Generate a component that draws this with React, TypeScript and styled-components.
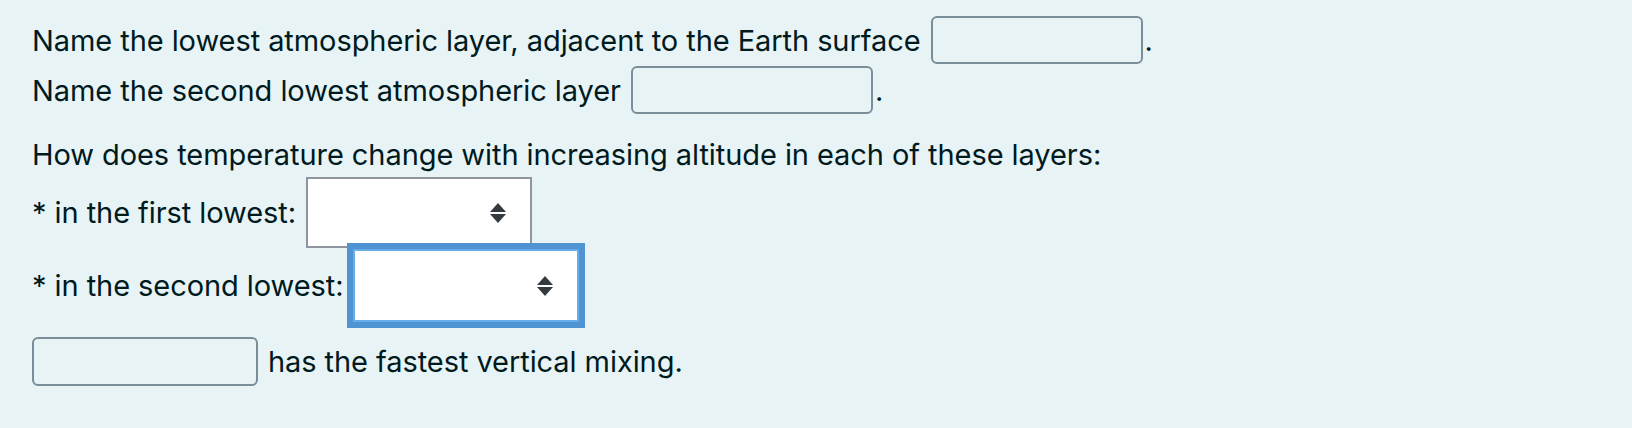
import React from 'react';
import styled, { createGlobalStyle } from 'styled-components';

const GlobalStyle = createGlobalStyle`
  html, body {
    margin: 0;
    padding: 0;
    background: #e7f3f5;
  }
  body {
    font-family: Inter, "Noto Sans", "Liberation Sans", sans-serif;
    color: #001a1e;
  }
`;

const Formulation = styled.div`
  background: #e7f3f5;
  min-height: 428px;
  box-sizing: border-box;
  padding: 16px 32px 0 32px;
  font-size: 29px;
  letter-spacing: -0.07px;
`;

const Row = styled.div<{ $top?: number }>`
  display: flex;
  align-items: center;
  gap: 10px;
  margin-top: ${p => p.$top ?? 0}px;
`;

const Para = styled.p`
  margin: 18px 0 0 0;
  line-height: 45px;
`;

const Blank = styled.span`
  display: inline-flex;
  align-items: center;
`;

const TextInput = styled.input<{ $w: number; $h?: number }>`
  box-sizing: border-box;
  width: ${p => p.$w}px;
  height: ${p => p.$h ?? 48}px;
  border: 2px solid #7a8e99;
  border-radius: 6px;
  background: transparent;
  font: inherit;
  padding: 0 12px;
  outline: none;
`;

const Dot = styled.span`
  margin-left: 2px;
`;

const SelectWrap = styled.span<{ $focused?: boolean }>`
  position: relative;
  display: inline-block;
  width: 226px;
  height: ${p => (p.$focused ? 73 : 71)}px;
  box-sizing: border-box;
  border: 2px solid ${p => (p.$focused ? '#66aeea' : '#8f959e')};
  background: #fff;
  box-shadow: ${p => (p.$focused ? '0 0 0 6px #5093d2' : 'none')};
  z-index: ${p => (p.$focused ? 1 : 0)};
`;

const Select = styled.select`
  appearance: none;
  width: 100%;
  height: 100%;
  border: none;
  background: transparent;
  font: inherit;
  color: inherit;
  outline: none;
`;

const Arrows = styled.svg`
  position: absolute;
  right: 24px;
  top: 50%;
  transform: translateY(-50%);
  pointer-events: none;
`;

const SortIcon = () => (
  <Arrows width="16" height="20" viewBox="0 0 16 20">
    <path d="M8 0 L16 9 L0 9 Z" fill="#343a40" />
    <path d="M0 11 L16 11 L8 20 Z" fill="#343a40" />
  </Arrows>
);

const Dropdown: React.FC<{ focused?: boolean }> = ({ focused }) => (
  <SelectWrap $focused={focused}>
    <Select defaultValue="">
      <option value=""></option>
      <option value="inc">increases</option>
      <option value="dec">decreases</option>
    </Select>
    <SortIcon />
  </SelectWrap>
);

export default function App() {
  return (
    <>
      <GlobalStyle />
      <Formulation>
        <Row>
          <span>Name the lowest atmospheric layer, adjacent to the Earth surface</span>
          <Blank>
            <TextInput $w={212} />
            <Dot>.</Dot>
          </Blank>
        </Row>
        <Row $top={2}>
          <span>Name the second lowest atmospheric layer</span>
          <Blank>
            <TextInput $w={242} />
            <Dot>.</Dot>
          </Blank>
        </Row>
        <Para>How does temperature change with increasing altitude in each of these layers:</Para>
        <Row>
          <span>* in the first lowest:</span>
          <Dropdown />
        </Row>
        <Row $top={1}>
          <span>* in the second lowest:</span>
          <Dropdown focused />
        </Row>
        <Row $top={15}>
          <TextInput $w={226} $h={49} />
          <span>has the fastest vertical mixing.</span>
        </Row>
      </Formulation>
    </>
  );
}
